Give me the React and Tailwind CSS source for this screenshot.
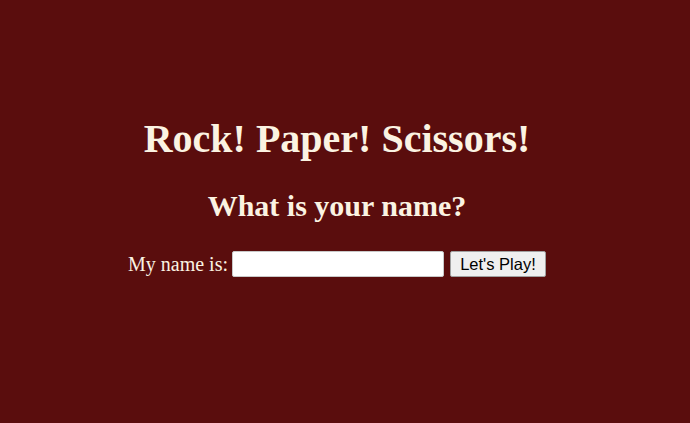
export default function App() {
  return (
    <div className="w-[690px] h-[423px] bg-[#5a0d0d] overflow-hidden">
      <div
        className="w-[674px] pt-[116px] flex flex-col items-center text-[#fbf3e2]"
        style={{ fontFamily: '"Liberation Serif", "Times New Roman", serif' }}
      >
        <h1 className="text-[40px] leading-[46px] font-bold">Rock! Paper! Scissors!</h1>
        <h2 className="mt-[27px] text-[30px] leading-[34px] font-bold">What is your name?</h2>
        <div className="mt-[28px] flex items-center h-[26px]">
          <label className="text-[20px] leading-[23px] mr-[4px]">My name is:</label>
          <input
            type="text"
            className="w-[212px] h-[26px] bg-white border border-[#c8c8c8] rounded-[2px] px-1 text-black outline-none"
          />
          <button
            className="ml-[6px] w-[96px] h-[26px] bg-[#efefef] border border-[#a0a0a0] rounded-[2px] text-[16.5px] leading-[20px] text-black"
            style={{ fontFamily: '"Liberation Sans", Arial, sans-serif' }}
          >
            Let's Play!
          </button>
        </div>
      </div>
    </div>
  );
}
